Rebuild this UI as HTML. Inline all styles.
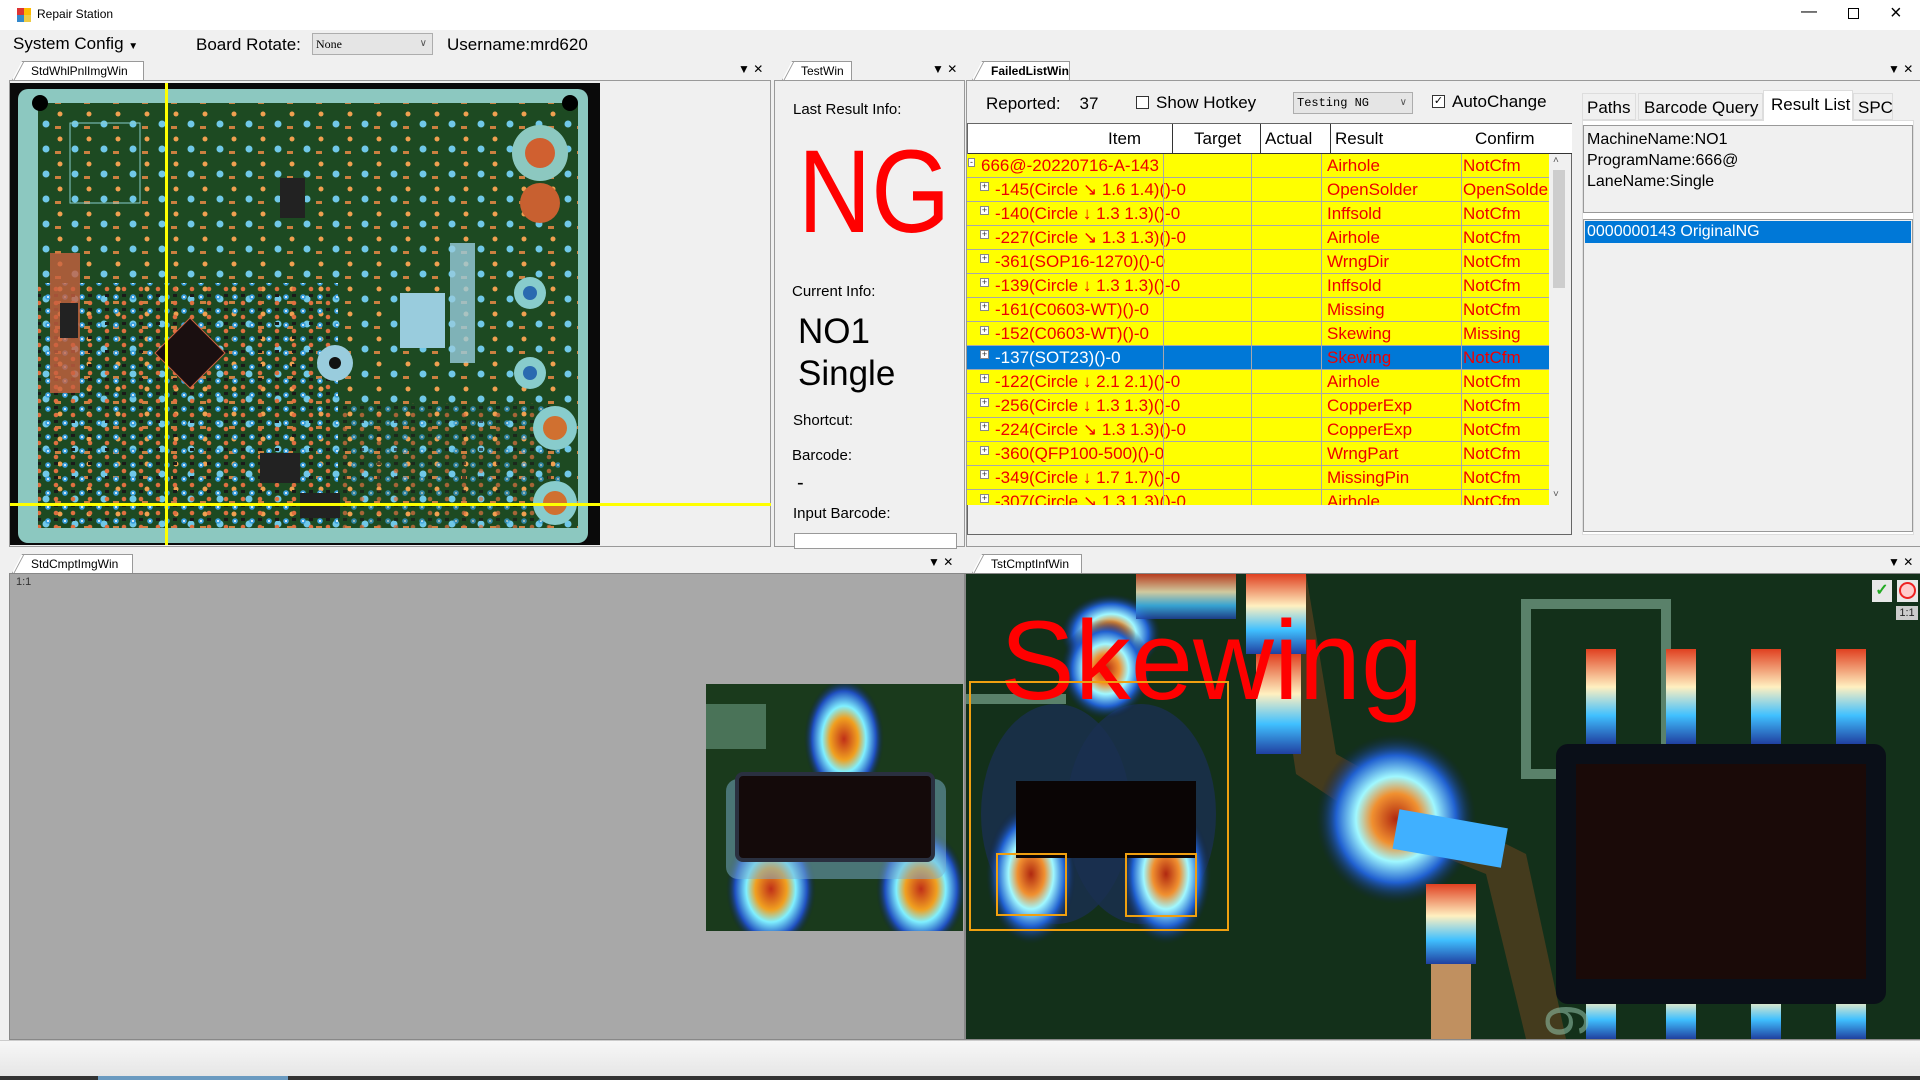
<!DOCTYPE html>
<html><head><meta charset="utf-8"><style>
*{box-sizing:border-box;margin:0;padding:0}
body{width:1920px;height:1080px;background:#f0f0f0;font-family:"Liberation Sans",sans-serif;position:relative;overflow:hidden;color:#000}
.a{position:absolute}
.tab{position:absolute;height:19px;background:#fff;border:1px solid #999;border-bottom:none;font-size:12px;line-height:18px;padding-left:18px;clip-path:polygon(10px 0,100% 0,100% 100%,0 100%)}
.tab:before{content:"";position:absolute;left:0;top:0;width:14px;height:19px;border-left:1px solid #999;transform:skewX(-28deg);transform-origin:bottom left}
.row{position:absolute;left:967px;width:582px;height:24px;background:#ff0;border-bottom:1px solid #a8a8a8;font-size:17px;color:#e00;line-height:23px;white-space:nowrap;overflow:hidden}
.row span{position:absolute;top:0}
.row .pl{position:absolute;left:13px;top:4px;width:9px;height:9px;border:1px solid #888;background:#fff;font-size:9px;line-height:7px;text-align:center;color:#333}
.vl{position:absolute;top:154px;height:351px;width:1px;background:#a8a8a8}
</style></head><body>
<div class="a" style="left:0;top:0;width:1920px;height:30px;background:#fff"></div>
<div class="a" style="left:17px;top:8px;width:7px;height:7px;background:#d33"></div>
<div class="a" style="left:24px;top:8px;width:7px;height:7px;background:#fb0"></div>
<div class="a" style="left:17px;top:15px;width:7px;height:7px;background:#38c"></div>
<div class="a" style="left:24px;top:15px;width:7px;height:7px;background:#ec4"></div>
<div class="a" style="left:37px;top:7px;font-size:12px">Repair Station</div>
<div class="a" style="left:1801px;top:3px;font-size:16px">&#8212;</div>
<div class="a" style="left:1848px;top:8px;width:11px;height:11px;border:1px solid #000"></div>
<div class="a" style="left:1890px;top:2px;font-size:20px">&#215;</div>
<div class="a" style="left:13px;top:34px;font-size:17px">System Config <span style="font-size:10px">&#9660;</span></div>
<div class="a" style="left:196px;top:35px;font-size:17px">Board Rotate:</div>
<div class="a" style="left:312px;top:33px;width:121px;height:22px;background:#e5e5e5;border:1px solid #adadad;font-family:'Liberation Serif',serif;font-size:12px;line-height:20px;padding-left:3px">None<span style="position:absolute;right:5px;top:0;font-size:10px;color:#555">&#8744;</span></div>
<div class="a" style="left:447px;top:35px;font-size:17px">Username:mrd620</div>

<div class="tab" style="left:12px;top:61px;width:132px">StdWhlPnlImgWin</div>
<div class="a" style="left:738px;top:62px;font-size:12px">&#9660; &#10005;</div>
<div class="a" style="left:9px;top:80px;width:762px;height:467px;border:1px solid #999;background:#f0f0f0"></div>
<svg class="a" style="left:10px;top:83px" width="590" height="462" viewBox="0 0 590 462">
<defs>
<pattern id="p1" width="17" height="14" patternUnits="userSpaceOnUse"><circle cx="4" cy="4" r="2.8" fill="#3aa0e0"/><circle cx="4" cy="4" r="1" fill="#fff"/><circle cx="12" cy="10" r="2.3" fill="#e07040"/><rect x="10" y="1" width="4" height="3" fill="#1a1a1a"/></pattern>
<pattern id="p2" width="29" height="25" patternUnits="userSpaceOnUse"><circle cx="7" cy="16" r="3.5" fill="#70c8e8"/><circle cx="21" cy="6" r="2.5" fill="#f0a050"/><rect x="16" y="18" width="6" height="3" fill="#cc8040"/></pattern>
</defs>
<rect width="590" height="462" fill="#0a0a0a"/>
<rect x="8" y="6" width="570" height="454" rx="10" fill="#8cc8c0"/>
<rect x="28" y="20" width="540" height="425" fill="#1d4a22"/>
<rect x="28" y="20" width="540" height="425" fill="url(#p2)"/>
<rect x="28" y="200" width="300" height="245" fill="url(#p1)"/>
<rect x="330" y="320" width="220" height="125" fill="url(#p1)" opacity=".7"/>
<rect x="60" y="40" width="70" height="80" fill="none" stroke="#8cc" stroke-width="1"/>
<rect x="40" y="170" width="30" height="140" fill="#c86040" opacity=".8"/>
<rect x="50" y="220" width="18" height="35" fill="#222"/>
<polygon points="180,235 215,270 180,305 145,270" fill="#1a0f10" stroke="#d06040"/>
<rect x="270" y="95" width="25" height="40" fill="#222"/>
<rect x="390" y="210" width="45" height="55" fill="#9cd"/>
<rect x="440" y="160" width="25" height="120" fill="#9cd" opacity=".8"/>
<circle cx="325" cy="280" r="18" fill="#9cd"/><circle cx="325" cy="280" r="6" fill="#111"/>
<circle cx="530" cy="70" r="28" fill="#8cc8c0"/><circle cx="530" cy="70" r="15" fill="#d06030"/>
<circle cx="530" cy="120" r="20" fill="#c86030"/>
<circle cx="520" cy="210" r="16" fill="#8cc"/><circle cx="520" cy="210" r="7" fill="#2a6ab0"/>
<circle cx="520" cy="290" r="16" fill="#8cc"/><circle cx="520" cy="290" r="7" fill="#2a6ab0"/>
<circle cx="545" cy="345" r="22" fill="#8cc"/><circle cx="545" cy="345" r="12" fill="#d07030"/>
<circle cx="545" cy="420" r="22" fill="#8cc"/><circle cx="545" cy="420" r="12" fill="#d07030"/>
<rect x="250" y="370" width="40" height="30" fill="#222"/>
<rect x="290" y="410" width="40" height="25" fill="#222"/>
<circle cx="30" cy="20" r="8" fill="#000"/><circle cx="560" cy="20" r="8" fill="#000"/>
</svg>
<div class="a" style="left:165px;top:83px;width:3px;height:462px;background:#ff0"></div>
<div class="a" style="left:10px;top:503px;width:761px;height:3px;background:#ff0"></div>

<div class="tab" style="left:782px;top:61px;width:70px">TestWin</div>
<div class="a" style="left:932px;top:62px;font-size:12px">&#9660; &#10005;</div>
<div class="a" style="left:774px;top:80px;width:191px;height:467px;border:1px solid #999"></div>
<div class="a" style="left:793px;top:101px;font-size:15px">Last Result Info:</div>
<div class="a" style="left:798px;top:133px;font-size:118px;color:#f00;line-height:1;transform:scaleX(0.86);transform-origin:left top">NG</div>
<div class="a" style="left:792px;top:283px;font-size:15px">Current Info:</div>
<div class="a" style="left:798px;top:311px;font-size:35px;line-height:42px">NO1</div>
<div class="a" style="left:798px;top:353px;font-size:35px;line-height:42px">Single</div>
<div class="a" style="left:793px;top:412px;font-size:15px">Shortcut:</div>
<div class="a" style="left:792px;top:447px;font-size:15px">Barcode:</div>
<div class="a" style="left:797px;top:472px;font-size:20px">-</div>
<div class="a" style="left:793px;top:505px;font-size:15px">Input Barcode:</div>
<div class="a" style="left:794px;top:533px;width:163px;height:16px;background:#fff;border:1px solid #999"></div>

<div class="tab" style="left:972px;top:61px;width:98px;font-weight:bold">FailedListWin</div>
<div class="a" style="left:1888px;top:62px;font-size:12px">&#9660; &#10005;</div>
<div class="a" style="left:966px;top:80px;width:955px;height:467px;border:1px solid #999"></div>
<div class="a" style="left:986px;top:94px;font-size:17px">Reported:&nbsp;&nbsp;&nbsp;&nbsp;37</div>
<div class="a" style="left:1136px;top:96px;width:13px;height:13px;border:1px solid #333;background:#fff"></div>
<div class="a" style="left:1156px;top:93px;font-size:17px">Show Hotkey</div>
<div class="a" style="left:1293px;top:92px;width:120px;height:22px;background:#e5e5e5;border:1px solid #adadad;font-family:'Liberation Mono',monospace;font-size:12px;line-height:20px;padding-left:3px">Testing NG<span style="position:absolute;right:5px;top:0;font-size:10px;color:#555;font-family:'Liberation Sans'">&#8744;</span></div>
<div class="a" style="left:1432px;top:95px;width:13px;height:13px;border:1px solid #333;background:#fff;font-size:11px;line-height:11px;text-align:center">&#10003;</div>
<div class="a" style="left:1452px;top:92px;font-size:17px">AutoChange</div>
<div class="a" style="left:967px;top:123px;width:605px;height:412px;border:1px solid #666;background:#f0f0f0"></div>
<div class="a" style="left:968px;top:124px;width:604px;height:30px;background:#fff;border-bottom:1px solid #333;font-size:17px;line-height:29px">
<span class="a" style="left:140px">Item</span><span class="a" style="left:204px;width:1px;height:29px;background:#333"></span>
<span class="a" style="left:226px">Target</span><span class="a" style="left:292px;width:1px;height:29px;background:#333"></span>
<span class="a" style="left:297px">Actual</span><span class="a" style="left:362px;width:1px;height:29px;background:#333"></span>
<span class="a" style="left:367px">Result</span>
<span class="a" style="left:507px">Confirm</span>
</div>
<div class="row" style="top:154px"><span class="pl" style="left:1px;width:7px">-</span><span style="left:14px">666@-20220716-A-143</span><span style="left:360px">Airhole</span><span style="left:496px">NotCfm</span></div>
<div class="row" style="top:178px"><span class="pl">+</span><span style="left:28px">-145(Circle &#8600; 1.6 1.4)()-0</span><span style="left:360px">OpenSolder</span><span style="left:496px">OpenSolder</span></div>
<div class="row" style="top:202px"><span class="pl">+</span><span style="left:28px">-140(Circle &#8595; 1.3 1.3)()-0</span><span style="left:360px">Inffsold</span><span style="left:496px">NotCfm</span></div>
<div class="row" style="top:226px"><span class="pl">+</span><span style="left:28px">-227(Circle &#8600; 1.3 1.3)()-0</span><span style="left:360px">Airhole</span><span style="left:496px">NotCfm</span></div>
<div class="row" style="top:250px"><span class="pl">+</span><span style="left:28px">-361(SOP16-1270)()-0</span><span style="left:360px">WrngDir</span><span style="left:496px">NotCfm</span></div>
<div class="row" style="top:274px"><span class="pl">+</span><span style="left:28px">-139(Circle &#8595; 1.3 1.3)()-0</span><span style="left:360px">Inffsold</span><span style="left:496px">NotCfm</span></div>
<div class="row" style="top:298px"><span class="pl">+</span><span style="left:28px">-161(C0603-WT)()-0</span><span style="left:360px">Missing</span><span style="left:496px">NotCfm</span></div>
<div class="row" style="top:322px"><span class="pl">+</span><span style="left:28px">-152(C0603-WT)()-0</span><span style="left:360px">Skewing</span><span style="left:496px">Missing</span></div>
<div class="row" style="top:346px;background:#0078d7"><span class="pl">+</span><span style="left:28px;color:#fff">-137(SOT23)()-0</span><span style="left:360px">Skewing</span><span style="left:496px">NotCfm</span></div>
<div class="row" style="top:370px"><span class="pl">+</span><span style="left:28px">-122(Circle &#8595; 2.1 2.1)()-0</span><span style="left:360px">Airhole</span><span style="left:496px">NotCfm</span></div>
<div class="row" style="top:394px"><span class="pl">+</span><span style="left:28px">-256(Circle &#8595; 1.3 1.3)()-0</span><span style="left:360px">CopperExp</span><span style="left:496px">NotCfm</span></div>
<div class="row" style="top:418px"><span class="pl">+</span><span style="left:28px">-224(Circle &#8600; 1.3 1.3)()-0</span><span style="left:360px">CopperExp</span><span style="left:496px">NotCfm</span></div>
<div class="row" style="top:442px"><span class="pl">+</span><span style="left:28px">-360(QFP100-500)()-0</span><span style="left:360px">WrngPart</span><span style="left:496px">NotCfm</span></div>
<div class="row" style="top:466px"><span class="pl">+</span><span style="left:28px">-349(Circle &#8595; 1.7 1.7)()-0</span><span style="left:360px">MissingPin</span><span style="left:496px">NotCfm</span></div>
<div class="row" style="top:490px;height:15px;border:none"><span class="pl">+</span><span style="left:28px">-307(Circle &#8600; 1.3 1.3)()-0</span><span style="left:360px">Airhole</span><span style="left:496px">NotCfm</span></div>
<div class="vl" style="left:1163px"></div><div class="vl" style="left:1251px"></div><div class="vl" style="left:1321px"></div><div class="vl" style="left:1461px"></div>
<div class="a" style="left:1549px;top:154px;width:22px;height:351px;background:#f0f0f0"></div>
<div class="a" style="left:1553px;top:170px;width:12px;height:118px;background:#cdcdcd"></div>
<div class="a" style="left:1553px;top:155px;font-size:10px;color:#555">&#708;</div>
<div class="a" style="left:1553px;top:489px;font-size:10px;color:#555">&#709;</div>
<div class="a" style="left:1582px;top:120px;width:332px;height:415px;background:#fff;border:1px solid #ddd"></div>
<div class="a" style="left:1582px;top:93px;width:54px;height:27px;border:1px solid #ddd;background:#f0f0f0;font-size:17px;line-height:27px;padding-left:4px">Paths</div>
<div class="a" style="left:1638px;top:93px;width:125px;height:27px;border:1px solid #ddd;background:#f0f0f0;font-size:17px;line-height:27px;padding-left:5px">Barcode Query</div>
<div class="a" style="left:1763px;top:90px;width:90px;height:31px;border:1px solid #ddd;border-bottom:none;background:#fff;font-size:17px;line-height:28px;padding-left:7px">Result List</div>
<div class="a" style="left:1853px;top:93px;width:40px;height:27px;border:1px solid #ddd;background:#f0f0f0;font-size:17px;line-height:27px;padding-left:4px">SPC</div>
<div class="a" style="left:1583px;top:125px;width:330px;height:88px;background:#f0f0f0;border:1px solid #999;font-size:16px;line-height:21px;padding:3px 3px">MachineName:NO1<br>ProgramName:666@<br>LaneName:Single</div>
<div class="a" style="left:1583px;top:219px;width:330px;height:313px;background:#f0f0f0;border:1px solid #999"></div>
<div class="a" style="left:1585px;top:221px;width:326px;height:22px;background:#0078d7;color:#fff;font-size:16px;line-height:22px;padding-left:2px">0000000143 OriginalNG</div>

<div class="tab" style="left:12px;top:554px;width:121px">StdCmptImgWin</div>
<div class="a" style="left:928px;top:555px;font-size:12px">&#9660; &#10005;</div>
<div class="a" style="left:9px;top:573px;width:956px;height:467px;border:1px solid #888;background:#a8a8a8"></div>
<div class="a" style="left:16px;top:576px;font-size:11px;color:#333">1:1</div>
<svg class="a" style="left:706px;top:684px" width="257" height="247" viewBox="0 0 257 247">
<defs>
<radialGradient id="g1" cx=".5" cy=".5" r=".5"><stop offset="0" stop-color="#c03018"/><stop offset=".35" stop-color="#f0a020"/><stop offset=".55" stop-color="#80f0ff"/><stop offset=".8" stop-color="#2050c0"/><stop offset="1" stop-color="#102030" stop-opacity="0"/></radialGradient>
</defs>
<rect width="257" height="247" fill="#1a3a1c"/>
<rect x="0" y="20" width="60" height="45" fill="#6a9a80" opacity=".6"/>
<ellipse cx="138" cy="55" rx="40" ry="60" fill="url(#g1)"/>
<ellipse cx="65" cy="205" rx="45" ry="60" fill="url(#g1)"/>
<ellipse cx="215" cy="205" rx="45" ry="60" fill="url(#g1)"/>
<rect x="20" y="95" width="220" height="100" rx="12" fill="#7ab0d0" opacity=".5"/>
<rect x="31" y="90" width="196" height="86" rx="6" fill="#140a0a" stroke="#2a3040" stroke-width="4"/>
</svg>

<div class="tab" style="left:972px;top:554px;width:110px">TstCmptInfWin</div>
<div class="a" style="left:1888px;top:555px;font-size:12px">&#9660; &#10005;</div>
<svg class="a" style="left:966px;top:574px" width="954" height="465" viewBox="0 0 954 465">
<defs>
<radialGradient id="g2" cx=".5" cy=".5" r=".5"><stop offset="0" stop-color="#b02810"/><stop offset=".3" stop-color="#f09030"/><stop offset=".5" stop-color="#a0f8ff"/><stop offset=".75" stop-color="#2060d0"/><stop offset="1" stop-color="#102040" stop-opacity="0"/></radialGradient>
<linearGradient id="g3" x1="0" y1="0" x2="0" y2="1"><stop offset="0" stop-color="#e04020"/><stop offset=".4" stop-color="#fff0c0"/><stop offset=".7" stop-color="#40c0ff"/><stop offset="1" stop-color="#2040a0"/></linearGradient>
</defs>
<rect width="954" height="465" fill="#13301a"/>
<path d="M300 0 L330 200 L420 260 L520 300 L560 465 L600 465 L560 280 L460 230 L370 180 L340 0Z" fill="#5a4020" opacity=".7"/>
<path d="M560 30 L700 30 L700 200 L560 200Z" fill="none" stroke="#8ab8a0" stroke-width="10" opacity=".6"/>
<rect x="0" y="120" width="100" height="10" fill="#8ab8a0" opacity=".6"/>
<ellipse cx="145" cy="60" rx="50" ry="40" fill="url(#g2)"/>
<ellipse cx="90" cy="240" rx="75" ry="110" fill="#1a3050" opacity=".8"/>
<ellipse cx="175" cy="240" rx="75" ry="110" fill="#1a3050" opacity=".8"/>
<ellipse cx="140" cy="95" rx="45" ry="50" fill="url(#g2)"/>
<ellipse cx="65" cy="300" rx="45" ry="70" fill="url(#g2)"/>
<ellipse cx="200" cy="300" rx="45" ry="70" fill="url(#g2)"/>
<rect x="50" y="207" width="180" height="77" fill="#0a0505"/>
<ellipse cx="430" cy="245" rx="80" ry="85" fill="url(#g2)"/>
<rect x="430" y="235" width="110" height="40" fill="#40b0ff" transform="rotate(10 430 255)"/>
<rect x="620" y="75" width="30" height="95" fill="url(#g3)"/>
<rect x="700" y="75" width="30" height="95" fill="url(#g3)"/>
<rect x="785" y="75" width="30" height="95" fill="url(#g3)"/>
<rect x="870" y="75" width="30" height="95" fill="url(#g3)"/>
<rect x="620" y="400" width="30" height="65" fill="url(#g3)"/>
<rect x="700" y="400" width="30" height="65" fill="url(#g3)"/>
<rect x="785" y="400" width="30" height="65" fill="url(#g3)"/>
<rect x="870" y="400" width="30" height="65" fill="url(#g3)"/>
<rect x="280" y="0" width="60" height="80" fill="url(#g3)"/>
<rect x="170" y="0" width="100" height="45" fill="url(#g3)" opacity=".8"/>
<rect x="290" y="80" width="45" height="100" fill="url(#g3)"/>
<rect x="590" y="170" width="330" height="260" rx="12" fill="#0a0f18"/>
<rect x="610" y="190" width="290" height="215" fill="#1a0a08"/>
<rect x="460" y="310" width="50" height="80" fill="url(#g3)"/>
<rect x="465" y="390" width="40" height="75" fill="#c09060"/>
<text x="580" y="430" font-size="60" fill="#8ab8a0" opacity=".6" font-family="Liberation Sans" transform="rotate(90 580 430)">69</text>
</svg>
<div class="a" style="left:1000px;top:605px;font-size:112px;color:#f00;line-height:1">Skewing</div>
<div class="a" style="left:969px;top:681px;width:260px;height:250px;border:2px solid #f0a010"></div>
<div class="a" style="left:996px;top:853px;width:71px;height:63px;border:2px solid #f0a010"></div>
<div class="a" style="left:1125px;top:853px;width:72px;height:64px;border:2px solid #f0a010"></div>
<div class="a" style="left:1872px;top:580px;width:20px;height:22px;background:#e8e8e8;color:#2a2;font-size:16px;text-align:center;line-height:22px;font-weight:bold">&#10003;</div>
<div class="a" style="left:1897px;top:580px;width:21px;height:22px;background:#e8e8e8"><div style="margin:2px;width:17px;height:17px;border:2px solid #e22;border-radius:50%;background:#fcc"></div></div>
<div class="a" style="left:1896px;top:606px;width:22px;height:14px;background:#ccc;font-size:11px;text-align:center;line-height:14px;color:#222">1:1</div>
<div class="a" style="left:965px;top:573px;width:956px;height:467px;border:1px solid #888"></div>

<div class="a" style="left:0;top:1040px;width:1920px;height:36px;background:linear-gradient(#f7f7f7,#e6e6e6);border-top:1px solid #ccc"></div>
<div class="a" style="left:0;top:1076px;width:1920px;height:4px;background:#333"></div>
<div class="a" style="left:98px;top:1076px;width:190px;height:4px;background:#6a9ac0"></div>
</body></html>
